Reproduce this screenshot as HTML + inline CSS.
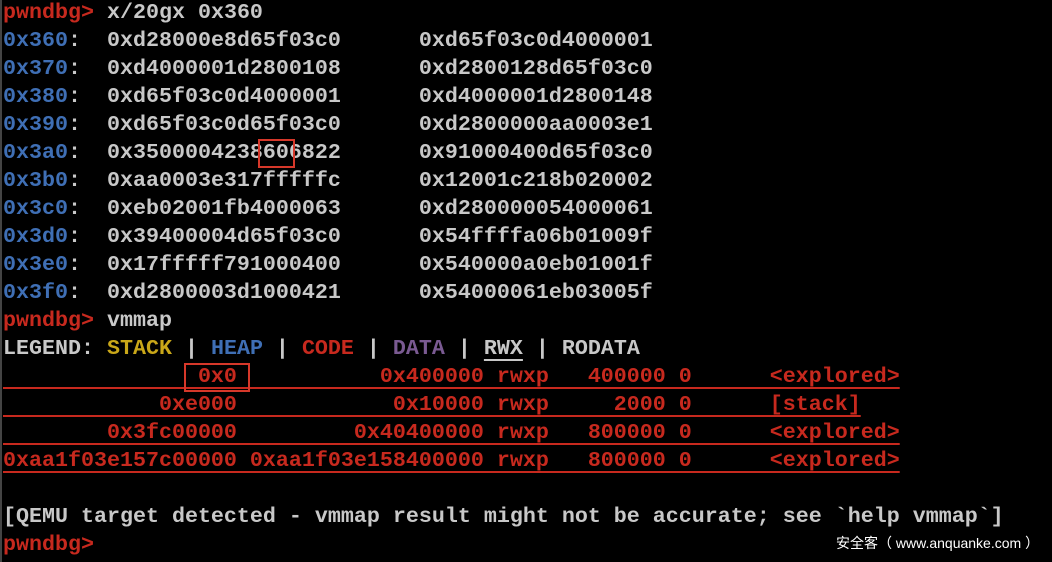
<!DOCTYPE html>
<html><head><meta charset="utf-8"><style>
html,body{margin:0;padding:0;background:#000;width:1052px;height:562px;overflow:hidden}
body{position:relative}
#t{position:absolute;left:3px;top:-1px;font-family:"Liberation Mono",monospace;font-size:21.67px;line-height:28px;color:#c8c8c8;font-weight:bold;white-space:pre;letter-spacing:0}
.r{color:#c7291e}.b{color:#3f6fb5}.y{color:#c9a719}.p{color:#7a5a92}
.u{text-decoration:underline;text-decoration-thickness:2px;text-underline-offset:5px}
.box{position:absolute;border:2px solid #d6382a;box-sizing:border-box}
#lb{position:absolute;left:0;top:0;width:2px;height:562px;background:#444}
#wm{position:absolute;left:836px;top:533px;font-family:"Liberation Sans","Noto Sans CJK SC",sans-serif;font-size:14px;color:#fff;white-space:pre}
</style></head><body>
<div id="lb"></div>
<div id="t"><span class="r">pwndbg&gt;</span> x/20gx 0x360
<span class="b">0x360</span>:  0xd28000e8d65f03c0      0xd65f03c0d4000001
<span class="b">0x370</span>:  0xd4000001d2800108      0xd2800128d65f03c0
<span class="b">0x380</span>:  0xd65f03c0d4000001      0xd4000001d2800148
<span class="b">0x390</span>:  0xd65f03c0d65f03c0      0xd2800000aa0003e1
<span class="b">0x3a0</span>:  0x3500004238606822      0x91000400d65f03c0
<span class="b">0x3b0</span>:  0xaa0003e317fffffc      0x12001c218b020002
<span class="b">0x3c0</span>:  0xeb02001fb4000063      0xd280000054000061
<span class="b">0x3d0</span>:  0x39400004d65f03c0      0x54ffffa06b01009f
<span class="b">0x3e0</span>:  0x17fffff791000400      0x540000a0eb01001f
<span class="b">0x3f0</span>:  0xd2800003d1000421      0x54000061eb03005f
<span class="r">pwndbg&gt;</span> vmmap
LEGEND: <span class="y">STACK</span> | <span class="b">HEAP</span> | <span class="r">CODE</span> | <span class="p">DATA</span> | <span class="u">RWX</span> | RODATA
<span class="r u">               0x0           0x400000 rwxp   400000 0      &lt;explored&gt;</span>
<span class="r u">            0xe000            0x10000 rwxp     2000 0      [stack]</span>
<span class="r u">        0x3fc00000         0x40400000 rwxp   800000 0      &lt;explored&gt;</span>
<span class="r u">0xaa1f03e157c00000 0xaa1f03e158400000 rwxp   800000 0      &lt;explored&gt;</span>

[QEMU target detected - vmmap result might not be accurate; see `help vmmap`]
<span class="r">pwndbg&gt;</span></div>
<div class="box" style="left:258px;top:139px;width:37px;height:29px"></div>
<div class="box" style="left:184px;top:363px;width:66px;height:29px"></div>
<div id="wm">安全客（ www.anquanke.com ）</div>
</body></html>
